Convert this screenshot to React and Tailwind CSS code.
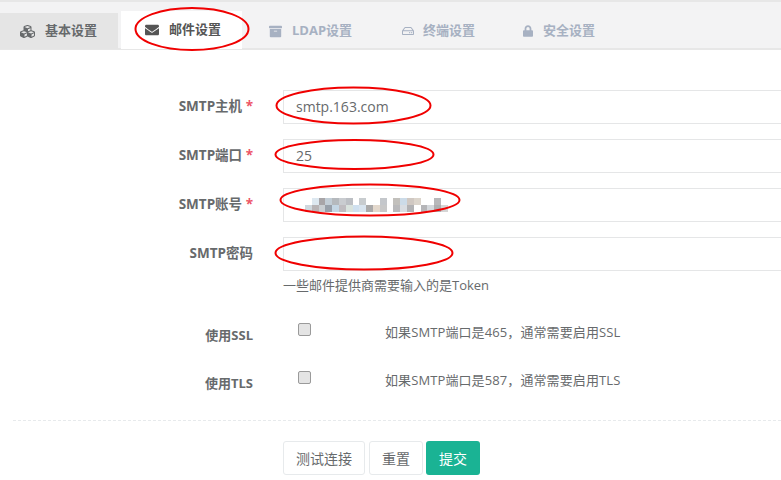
import { FaCubes, FaEnvelope, FaArchive, FaRegHdd, FaLock } from 'react-icons/fa'

const font = { fontFamily: '"Open Sans", "Noto Sans CJK SC", sans-serif' }

const tabs = [
  { label: '基本设置', Icon: FaCubes, cls: 'w-[118px] h-[36px] mr-[3px] bg-[#e5e5e5] text-[#676a6c] pl-[19px]', icon: 'w-[17px] h-[15px] mr-[9px]' },
  { label: '邮件设置', Icon: FaEnvelope, cls: 'w-[121px] h-[38px] bg-white text-[#555] pl-[24px]', icon: 'w-[14px] h-[14px] mr-[10px]' },
  { label: 'LDAP设置', Icon: FaArchive, cls: 'w-[127px] h-[36px] text-[#a7b1c2] pl-[27px]', icon: 'w-[13px] h-[13px] mr-[10px]' },
  { label: '终端设置', Icon: FaRegHdd, cls: 'w-[130px] h-[36px] text-[#a7b1c2] pl-[33px]', icon: 'w-[12px] h-[12px] mr-[9px]' },
  { label: '安全设置', Icon: FaLock, cls: 'h-[36px] text-[#a7b1c2] pl-[24px]', icon: 'w-[10px] h-[12px] mr-[10px]' },
]

const blur = [
  ['#ffffff', '#dde8f0', '#a8a5a8', '#c2cdd6', '#b5b9bd', '#c9ccd0', '#bcbfc4', '#ffffff', '#c8cccf', '#ffffff', '#ffffff', '#c4c7cb', '#ffffff', '#c2c0bc', '#ccdbe8', '#d0c8c2', '#dcd5cc', '#ffffff', '#ffffff', '#b8b8ba', '#ffffff'],
  ['#cfd8de', '#b8b4b6', '#c9ced2', '#98a0aa', '#c4d6e4', '#bfbcc0', '#d9e3de', '#cfe0ef', '#d8e4ef', '#aaa9a9', '#e3d8cc', '#c8c8c8', '#ffffff', '#b9b9bb', '#d9dde2', '#b2b2b4', '#ffffff', '#b5b5b8', '#d5d8dc', '#aeaeb0', '#d5d5d5'],
]

function Field({ label, required, value, children }) {
  return (
    <div className="flex mb-[15px]">
      <label className="w-[253px] pt-[7px] text-right text-[13.5px] leading-[18px] font-bold text-[#676a6c]">
        {label}
        {required && <span className="text-[#ed5565]"> *</span>}
      </label>
      <div className="relative ml-[30px] -mr-[4px] flex-1 h-[34px] border border-[#e5e6e7] pl-[12px] pt-[6px] text-[14px] leading-[20px] text-[#676a6c]">
        {value}
        {children}
      </div>
    </div>
  )
}

function Check({ label, hint }) {
  return (
    <div className="flex h-[48px]">
      <label className="w-[253px] pt-[5px] text-right text-[13px] leading-[18px] font-bold text-[#676a6c]">{label}</label>
      <div className="w-[132px] pl-[45px] pt-[2px]">
        <div className="w-[13px] h-[13px] rounded-[2px] border border-[#9a9a9a] bg-[#e4e4e4]" />
      </div>
      <p className="text-[13px] leading-[18px] pt-[2px] tracking-[0.1px] text-[#676a6c]">{hint}</p>
    </div>
  )
}

export default function App() {
  return (
    <div className="relative w-[781px] h-[480px] overflow-hidden bg-white" style={font}>
      <div className="h-[50px] pt-[12px] flex items-end bg-[#f3f3f4] border-t-2 border-b-2 border-[#e7e7e7]">
        {tabs.map(({ label, Icon, cls, icon }) => (
          <div key={label} className={`flex items-center shrink-0 text-[13px] font-bold -mb-[1px] ${cls}`}>
            <Icon className={icon} />
            {label}
          </div>
        ))}
      </div>

      <div className="pt-[40px]">
        <Field label="SMTP主机" required value="smtp.163.com" />
        <Field label="SMTP端口" required value="25" />
        <Field label="SMTP账号" required>
          <svg className="absolute left-[21px] top-[7px]" width="150" height="18" shapeRendering="crispEdges">
            {blur.map((row, y) =>
              row.map((c, x) => <rect key={`${x}-${y}`} x={x * 6.8} y={y * 7 + 2} width="6.8" height="7" fill={c} />)
            )}
          </svg>
        </Field>
        <Field label="SMTP密码" />
        <p className="-mt-[10px] ml-[283px] text-[13px] leading-[18px] text-[#676a6c]">一些邮件提供商需要输入的是Token</p>

        <div className="mt-[27px]">
          <Check label="使用SSL" hint="如果SMTP端口是465，通常需要启用SSL" />
          <Check label="使用TLS" hint="如果SMTP端口是587，通常需要启用TLS" />
        </div>

        <div className="mt-[3px] ml-[13px] border-t border-dashed border-[#e7eaec]" />

        <div className="mt-[20px] ml-[283px] flex text-[14px]">
          <button className="w-[82px] h-[34px] mr-[4px] rounded-[3px] border border-[#e7eaec] bg-white text-[#676a6c]">测试连接</button>
          <button className="w-[54px] h-[34px] mr-[3px] rounded-[3px] border border-[#e7eaec] bg-white text-[#676a6c]">重置</button>
          <button className="w-[54px] h-[34px] rounded-[3px] bg-[#1ab394] text-white">提交</button>
        </div>
      </div>

      {/* hand-drawn annotations on top of the screenshot */}
      <svg className="absolute left-0 top-0 pointer-events-none" width="781" height="480" fill="none" stroke="#f00000" strokeWidth="2">
        <ellipse cx="192" cy="29" rx="56.5" ry="21" />
        <ellipse cx="353.5" cy="105.5" rx="77" ry="18" />
        <ellipse cx="354.5" cy="154.5" rx="79" ry="14.5" />
        <ellipse cx="370" cy="200" rx="89.5" ry="15.5" />
        <ellipse cx="364" cy="253" rx="88.5" ry="16.5" />
      </svg>
    </div>
  )
}
